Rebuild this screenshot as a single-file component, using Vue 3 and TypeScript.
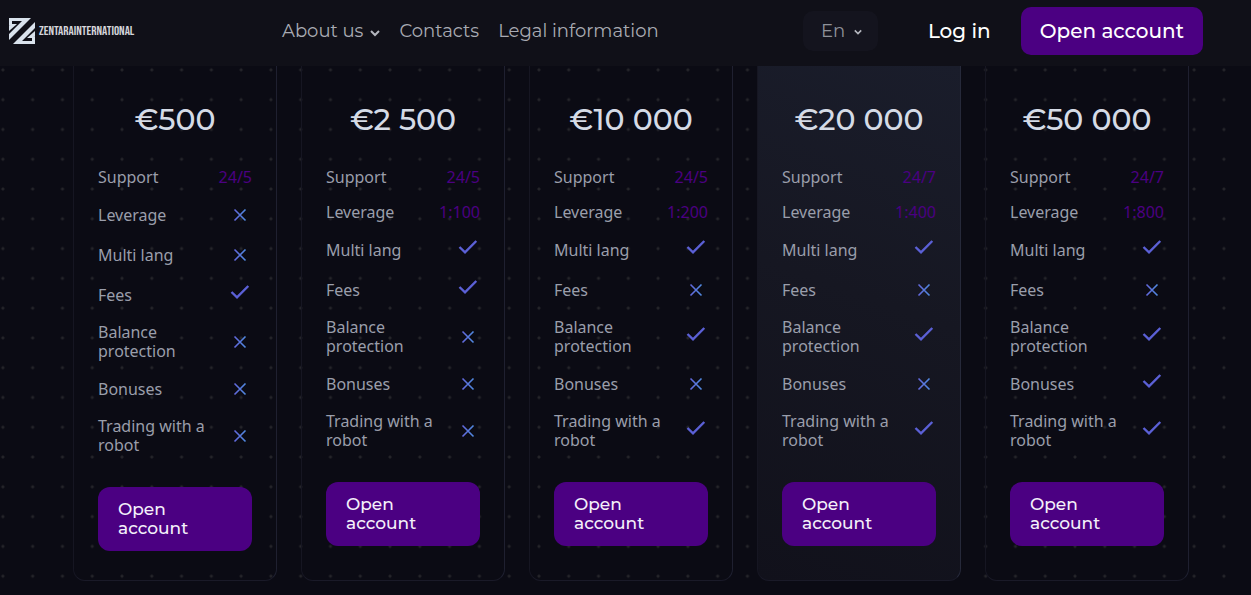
<script setup lang="ts">
type Value = string | boolean

interface Plan {
  price: string
  featured?: boolean
  features: Value[]
}

const labels: string[] = [
  'Support',
  'Leverage',
  'Multi lang',
  'Fees',
  'Balance protection',
  'Bonuses',
  'Trading with a robot',
]

const plans: Plan[] = [
  { price: '€500', features: ['24/5', false, false, true, false, false, false] },
  { price: '€2 500', features: ['24/5', '1:100', true, true, false, false, false] },
  { price: '€10 000', features: ['24/5', '1:200', true, false, true, false, true] },
  { price: '€20 000', featured: true, features: ['24/7', '1:400', true, false, true, false, true] },
  { price: '€50 000', features: ['24/7', '1:800', true, false, true, true, true] },
]
</script>

<template>
  <div class="page">
    <header class="header">
      <a class="logo" href="#">
        <svg class="logo-mark" viewBox="0 0 26 26" aria-hidden="true">
          <path d="M0 0H22L0 22V16L13 3H3V7L0 8Z" />
          <path d="M0 8L3 6H8L0 13Z" />
          <path d="M26 26H4L26 4V10L13 23H23V19L26 18Z" />
          <path d="M26 18L23 20H18L26 13Z" />
        </svg>
        <span class="logo-name">ZENTARAINTERNATIONAL</span>
      </a>
      <nav class="nav">
        <button type="button" class="nav-item">
          About us
          <svg class="chevron" viewBox="0 0 10 8" aria-hidden="true"><path d="M1 2L5 6L9 2" /></svg>
        </button>
        <a class="nav-item" href="#">Contacts</a>
        <a class="nav-item" href="#">Legal information</a>
      </nav>
      <div class="actions">
        <div class="lang">
          <select class="lang-select" aria-label="Language">
            <option>En</option>
          </select>
          <svg class="chevron small" viewBox="0 0 10 8" aria-hidden="true"><path d="M1 2L5 6L9 2" /></svg>
        </div>
        <a class="login" href="#">Log in</a>
        <a class="open" href="#">Open account</a>
      </div>
    </header>

    <main class="plans">
      <section v-for="plan in plans" :key="plan.price" class="card" :class="{ featured: plan.featured }">
        <h2 class="price">{{ plan.price }}</h2>
        <dl class="features">
          <div v-for="(value, i) in plan.features" :key="labels[i]" class="row">
            <dt>{{ labels[i] }}</dt>
            <dd>
              <template v-if="typeof value === 'string'">{{ value }}</template>
              <svg v-else-if="value" class="icon check" viewBox="0 0 24 24" role="img" aria-label="Yes">
                <path d="M3.5 9L9 14.3L20.3 3" />
              </svg>
              <svg v-else class="icon cross" viewBox="0 0 24 24" role="img" aria-label="No">
                <defs>
                  <linearGradient id="cross" gradientUnits="userSpaceOnUse" x1="6" y1="12" x2="18" y2="12">
                    <stop offset="0" stop-color="#6366dc" />
                    <stop offset="1" stop-color="#4f8be0" />
                  </linearGradient>
                </defs>
                <path d="M6.5 6.5L17.5 17.5M17.5 6.5L6.5 17.5" stroke="url(#cross)" />
              </svg>
            </dd>
          </div>
        </dl>
        <a class="cta" href="#">Open account</a>
      </section>
    </main>
  </div>
</template>

<style>
body {
  margin: 0;
  background: #0b0b14;
}
</style>

<style scoped>
.page {
  --display: Montserrat, Inter, sans-serif;
  --violet: #4b0082;
  min-height: 100vh;
  display: flex;
  flex-direction: column;
  font-family: 'Noto Sans', 'Open Sans', sans-serif;
  color: #9a9eab;
}

a {
  color: inherit;
  text-decoration: none;
}

.header {
  display: flex;
  align-items: center;
  height: 66px;
  box-sizing: border-box;
  padding: 0 48px 4px 9px;
  background: #101018;
  font-family: var(--display);
}

.logo {
  display: flex;
  align-items: center;
  gap: 4px;
  width: 273px;
}

.logo-mark {
  width: 26px;
  height: 26px;
  fill: #d9e2ec;
}

.logo-name {
  font-family: 'Bebas Neue', 'Liberation Sans Narrow', 'Liberation Sans', sans-serif;
  font-size: 13px;
  font-weight: 400;
  line-height: 16px;
  color: #d4d4da;
}

.nav {
  display: flex;
  align-items: center;
  gap: 19px;
}

.nav-item {
  display: flex;
  align-items: center;
  gap: 7px;
  padding: 0;
  border: 0;
  background: none;
  font: 400 18px/24px var(--display);
  color: #a9abb3;
  white-space: nowrap;
}

.chevron {
  width: 10px;
  height: 8px;
  margin-top: 4px;
  fill: none;
  stroke: #b4b6be;
  stroke-width: 2;
}

.actions {
  display: flex;
  align-items: center;
  margin-left: auto;
  white-space: nowrap;
}

.lang {
  display: grid;
  align-items: center;
  width: 75px;
  height: 40px;
  border-radius: 10px;
  background: #14141e;
}

.lang-select,
.chevron.small {
  grid-area: 1 / 1;
}

.lang-select {
  appearance: none;
  width: 100%;
  height: 100%;
  padding: 0 18px;
  border: 0;
  background: none;
  font: 400 18px/24px var(--display);
  color: #8f9199;
}

.chevron.small {
  justify-self: end;
  width: 8px;
  margin-top: 2px;
  margin-right: 16px;
  pointer-events: none;
}

.login {
  margin: 0 30px 0 50px;
  font-size: 20px;
  font-weight: 500;
  color: #fff;
}

.open {
  padding: 12px 19px;
  border-radius: 10px;
  background: var(--violet);
  font-size: 20px;
  font-weight: 500;
  line-height: 24px;
  color: #fff;
}

.plans {
  display: flex;
  gap: 24px;
  flex: 1;
  padding: 0 62px 14px 73px;
  background: radial-gradient(circle, #25252a 1px, transparent 2px);
  background-size: calc(100vw / 42) calc(100vw / 42);
  background-position: -12px -11px;
}

.card {
  flex: 1;
  min-width: 0;
  padding: 34px 24px 29px;
  border: 1px solid #161622;
  border-top: 0;
  border-right-color: #1f2030;
  border-bottom-color: #1a1a28;
  border-radius: 0 0 12px 12px;
}

.featured {
  background: linear-gradient(200deg, #1a1d2b 0%, #161722 45%, #11111b 100%);
  border-right-color: #26293a;
}

.price {
  margin: 0 0 29px;
  font: 500 30px/39px var(--display);
  color: #d5dbe6;
  text-align: center;
  white-space: nowrap;
}

.features {
  display: flex;
  flex-direction: column;
  gap: 16px;
  margin: 0 0 32px;
  font-size: 16px;
  line-height: 19px;
}

.row {
  display: flex;
  justify-content: space-between;
  align-items: center;
  gap: 16px;
}

.row dd {
  margin: 0;
  color: var(--violet);
}

.icon {
  display: block;
  width: 24px;
  height: 24px;
  fill: none;
}

.check {
  stroke: #5b60d6;
  stroke-width: 2.4;
}

.cross {
  stroke-width: 1.6;
}

.cta {
  display: block;
  padding: 13px 20px;
  border-radius: 12px;
  background: var(--violet);
  font: 500 17px/19px var(--display);
  color: #f4f0fa;
}
</style>
